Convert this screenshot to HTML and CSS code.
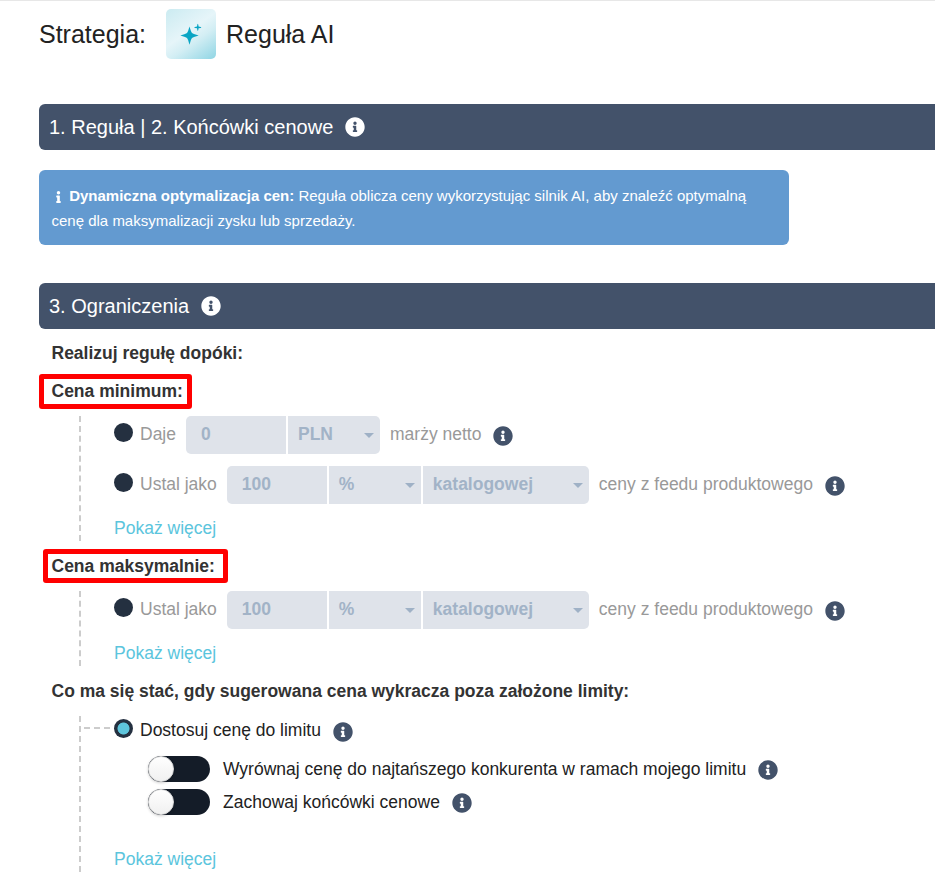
FILE: index.html
```html
<!DOCTYPE html>
<html lang="pl">
<head>
    <meta charset="UTF-8">
    <meta name="viewport" content="width=device-width, initial-scale=1.0">
    <title>Strategia: Reguła AI</title>
    <link rel="stylesheet" href="styles.css">
</head>
<body>

    <svg width="0" height="0" class="icons">
        <symbol id="info-circle" viewBox="0 0 512 512">
            <path fill="currentColor" d="M256 8C119.043 8 8 119.083 8 256c0 136.997 111.043 248 248 248s248-111.003 248-248C504 119.083 392.957 8 256 8zm0 110c23.196 0 42 18.804 42 42s-18.804 42-42 42-42-18.804-42-42 18.804-42 42-42zm56 254c0 6.627-5.373 12-12 12h-88c-6.627 0-12-5.373-12-12v-24c0-6.627 5.373-12 12-12h12v-64h-12c-6.627 0-12-5.373-12-12v-24c0-6.627 5.373-12 12-12h64c6.627 0 12 5.373 12 12v100h12c6.627 0 12 5.373 12 12v24z"/>
        </symbol>
    </svg>

    <main class="page">
        <h1 class="title">
            <span>Strategia:</span>
            <span class="rule-icon">
                <svg viewBox="0 0 50 50" width="50" height="50">
                    <path fill="#0aa5c4" d="M23.5 17.4L24.9 22.1Q25.5 24.5 28 25.1L32.7 26.6L28 28.1Q25.5 28.7 24.9 31.1L23.5 35.8L22.1 31.1Q21.5 28.7 19 28.1L14.4 26.6L19 25.1Q21.5 24.5 22.1 22.1Z"/>
                    <path fill="#0aa5c4" d="M31.8 14.8Q32.3 14.8 32.6 17.5Q35.4 17.9 35.4 18.4Q35.4 18.9 32.6 19.3Q32.3 22 31.8 22Q31.3 22 31 19.3Q28.2 18.9 28.2 18.4Q28.2 17.9 31 17.5Q31.3 14.8 31.8 14.8Z"/>
                </svg>
            </span>
            <span>Reguła AI</span>
        </h1>

        <h2 class="bar">1. Reguła | 2. Końcówki cenowe <svg class="info"><use href="#info-circle"/></svg></h2>

        <div class="alert">
            <svg class="alert-icon" viewBox="0 0 192 512"><path fill="currentColor" d="M20 424.229h20V279.771H20c-11.046 0-20-8.954-20-20V212c0-11.046 8.954-20 20-20h112c11.046 0 20 8.954 20 20v212.229h20c11.046 0 20 8.954 20 20V492c0 11.046-8.954 20-20 20H20c-11.046 0-20-8.954-20-20v-47.771c0-11.046 8.954-20 20-20zM96 0C56.235 0 24 32.235 24 72s32.235 72 72 72 72-32.235 72-72S135.764 0 96 0z"/></svg>
            <b>Dynamiczna optymalizacja cen:</b> Reguła oblicza ceny wykorzystując silnik AI, aby znaleźć optymalną cenę dla maksymalizacji zysku lub sprzedaży.
        </div>

        <h2 class="bar">3. Ograniczenia <svg class="info"><use href="#info-circle"/></svg></h2>

        <section class="limits">
            <h3>Realizuj regułę dopóki:</h3>
            <h3><span class="marked marked-min">Cena minimum:</span></h3>
            <div class="group">
                <div class="row disabled">
                    <span class="radio"></span>
                    <span class="label">Daje</span>
                    <div class="fields">
                        <span class="field">0</span>
                        <span class="field select">PLN</span>
                    </div>
                    <span class="label">marży netto</span>
                    <svg class="info"><use href="#info-circle"/></svg>
                </div>
                <div class="row disabled">
                    <span class="radio"></span>
                    <span class="label">Ustal jako</span>
                    <div class="fields">
                        <span class="field">100</span>
                        <span class="field select">%</span>
                        <span class="field select wide">katalogowej</span>
                    </div>
                    <span class="label">ceny z feedu produktowego</span>
                    <svg class="info"><use href="#info-circle"/></svg>
                </div>
                <a class="more">Pokaż więcej</a>
            </div>

            <h3><span class="marked marked-max">Cena maksymalnie:</span></h3>
            <div class="group">
                <div class="row disabled">
                    <span class="radio"></span>
                    <span class="label">Ustal jako</span>
                    <div class="fields">
                        <span class="field">100</span>
                        <span class="field select">%</span>
                        <span class="field select wide">katalogowej</span>
                    </div>
                    <span class="label">ceny z feedu produktowego</span>
                    <svg class="info"><use href="#info-circle"/></svg>
                </div>
                <a class="more">Pokaż więcej</a>
            </div>

            <h3>Co ma się stać, gdy sugerowana cena wykracza poza założone limity:</h3>
            <div class="group">
                <div class="row option">
                    <span class="branch"></span>
                    <span class="radio checked"></span>
                    <span class="label">Dostosuj cenę do limitu</span>
                    <svg class="info"><use href="#info-circle"/></svg>
                </div>
                <div class="switches">
                    <div class="switch-row">
                        <span class="switch"></span>
                        <span>Wyrównaj cenę do najtańszego konkurenta w ramach mojego limitu</span>
                        <svg class="info"><use href="#info-circle"/></svg>
                    </div>
                    <div class="switch-row">
                        <span class="switch"></span>
                        <span>Zachowaj końcówki cenowe</span>
                        <svg class="info"><use href="#info-circle"/></svg>
                    </div>
                </div>
                <a class="more">Pokaż więcej</a>
            </div>
        </section>
    </main>

</body>
</html>
```
FILE: styles.css
```css
* {
    box-sizing: border-box;
}

body {
    margin: 0;
    background-color: #fff;
    color: #222;
    font-family: "Liberation Sans", Arial, sans-serif;
    font-size: 17.5px;
    line-height: 25px;
    overflow: hidden;
}

.icons {
    display: none;
}

.page {
    border-top: 1px solid #e7e7e7;
    padding: 8px 0 0 39px;
}

.title {
    display: flex;
    align-items: center;
    height: 50px;
    margin: 0 0 45px;
    font-size: 25px;
    font-weight: normal;
}

.rule-icon {
    width: 50px;
    height: 50px;
    margin: 0 10px 0 20px;
    border-radius: 5px;
    background: linear-gradient(145deg, #cbebf1 0%, #e6f5f9 45%, #d3eef4 62%, #8fd5e4 100%);
}

.rule-icon svg {
    display: block;
}

.bar {
    display: flex;
    align-items: center;
    height: 46px;
    margin: 0;
    padding-left: 10px;
    border-radius: 6px 0 0 6px;
    background-color: #43526a;
    color: #fff;
    font-size: 20px;
    font-weight: normal;
}

.info {
    flex: none;
    width: 20px;
    height: 20px;
    margin: 1px 0 0 12px;
    color: #43526a;
}

.bar .info {
    margin-top: -1px;
    color: #fff;
}

.alert {
    width: 750px;
    height: 75px;
    margin: 20px 0 38px;
    padding: 13px 12.5px;
    border-radius: 6px;
    background-color: #639ad0;
    color: #fff;
    font-size: 15px;
}

.alert-icon {
    width: 5px;
    height: 12px;
    margin: 0 4.5px 0 4px;
    vertical-align: -1.5px;
}

.limits {
    padding: 12px 0 0 12.5px;
}

h3 {
    height: 25px;
    margin: 0 0 13px;
    color: #333;
    font-size: 17.5px;
    font-weight: bold;
}

.marked {
    position: relative;
}

/* red frame over the label */
.marked::after {
    content: "";
    position: absolute;
    border: 5px solid #f00;
    border-radius: 3px;
}

.marked-min::after {
    inset: -7px -9px -8px -13px;
}

.marked-max::after {
    inset: -7px -13px -7px -9px;
}

.group {
    margin: -1px 0 13px 27.5px;
    padding-left: 33px;
    border-left: 2px dashed #ccc;
}

.row {
    display: flex;
    align-items: center;
    height: 38px;
    margin-bottom: 12px;
}

.row .label {
    margin-top: -2px;
}

.disabled {
    color: #999;
}

.radio {
    width: 19px;
    height: 19px;
    margin: -5px 7px 0 0;
    border-radius: 50%;
    background-color: #243040;
}

.radio.checked {
    background: radial-gradient(circle, #5ec5dc 5.6px, #243040 6.4px);
}

.row .info {
    margin-top: 1px;
}

.fields {
    display: flex;
    gap: 2px;
    margin: 0 10px;
    border-radius: 5px;
    overflow: hidden;
}

.field {
    width: 100px;
    height: 38px;
    padding: 6px 15px 0;
    background-color: #dfe3ea;
    color: #a2b3c7;
    font-weight: bold;
}

.field.select {
    display: flex;
    justify-content: space-between;
    width: 92px;
    padding: 6px 6px 0 10px;
}

.field.wide {
    width: 166px;
}

/* dropdown arrow */
.select::after {
    content: "";
    width: 0;
    margin-top: 11px;
    height: 0;
    border: 5px solid transparent;
    border-top-color: #9fb1c6;
    border-bottom: none;
}

.more {
    display: block;
    height: 25px;
    color: #5bc5dd;
}

.group .option {
    position: relative;
    height: 28px;
    margin: 0;
    padding-top: 2px;
}

.branch {
    position: absolute;
    top: 11px;
    left: -30px;
    width: 26px;
    border-top: 2px dashed #ccc;
}

.switches {
    display: flex;
    flex-direction: column;
    gap: 7px;
    margin: 12px 0 32px 34px;
}

.switch-row {
    display: flex;
    align-items: center;
    height: 26px;
}

.switch {
    width: 62px;
    height: 26px;
    margin-right: 13px;
    border-radius: 13px;
    background-color: #141c28;
}

.switch::before {
    content: "";
    display: block;
    box-sizing: border-box;
    width: 26px;
    height: 26px;
    border: 1px solid #ddd;
    border-radius: 50%;
    background: linear-gradient(#fff, #f0f0f0) border-box;
    box-shadow: 0 1px 3px rgba(0, 0, 0, 0.2);
}
```
